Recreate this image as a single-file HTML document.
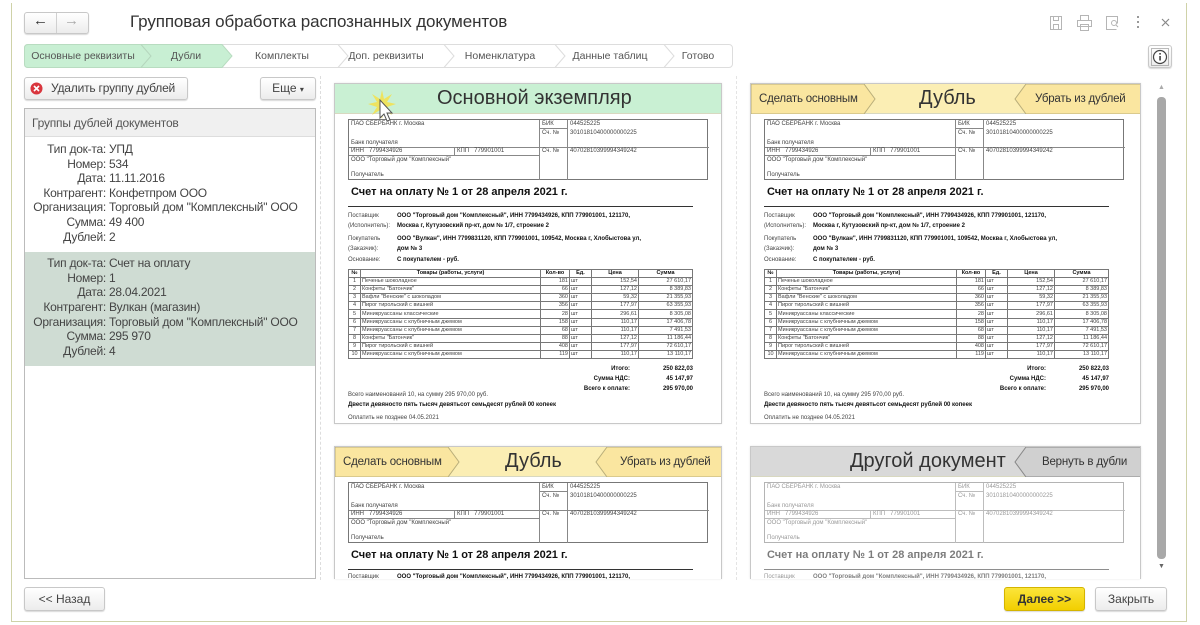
<!DOCTYPE html>
<html><head><meta charset="utf-8">
<style>
*{box-sizing:border-box;margin:0;padding:0}
body{width:1200px;height:625px;background:#fff;font-family:"Liberation Sans",Arial,sans-serif;color:#333;position:relative;overflow:hidden}
.a{position:absolute}
.win{left:11px;top:3px;width:1176px;height:619px;border:1px solid #cfd2a8;border-top:none}
.btn{position:absolute;background:linear-gradient(#fff,#ececec);border:1px solid #c8c8c8;border-radius:3px;box-shadow:0 1px 1px rgba(0,0,0,.15);font-size:12px;color:#444;text-align:center;white-space:nowrap}
.step{position:absolute;top:44px;height:24px;font-size:10.5px;color:#555;line-height:24px;text-align:center}
.card{position:absolute;border:1px solid #c8c8c8;background:#fff;overflow:hidden;box-shadow:0 0 2px rgba(0,0,0,.1)}
.hdr{position:absolute;left:0;top:0;right:0;height:30px;border-bottom:1px solid #d8d8c0}
.ht{position:absolute;top:3px;font-size:20px;color:#333;white-space:nowrap}
.hb{position:absolute;top:9px;font-size:11.5px;color:#333;white-space:nowrap;letter-spacing:-0.2px}
.doc{position:absolute;left:0;top:30px;width:390px;height:320px;font-size:6px;color:#444}
.bank{position:absolute;left:13px;top:5px;width:360px;height:61px;border:1px solid #777}
.ln{position:absolute;background:#888}
.t{position:absolute;white-space:nowrap}
.b{font-weight:bold;color:#111}
table.g{position:absolute;left:13px;top:155px;width:345px;border-collapse:collapse;font-size:5.5px}
table.g td{border:1px solid #777;height:8.1px;padding:0 1px;line-height:7px;white-space:nowrap}
table.g tr:first-child td{font-weight:bold;text-align:center;color:#111}
.r{text-align:right}.c{text-align:center}
.lst{display:flex;white-space:nowrap;font-size:12px;letter-spacing:-0.25px;line-height:14.6px;color:#444}
.lst .l{width:81px;text-align:right;direction:rtl}
.lst .l span{direction:ltr;unicode-bidi:embed}
</style></head><body>
<div class="a win"></div>

<div class="btn" style="left:24px;top:12px;width:65px;height:22px"></div>
<div class="a" style="left:56px;top:13px;width:1px;height:20px;background:#d0d0d0"></div>
<div class="a" style="left:33px;top:12px;font-size:15px;color:#333;font-weight:bold">&#8592;</div>
<div class="a" style="left:64px;top:12px;font-size:15px;color:#aaa;font-weight:bold">&#8594;</div>
<div class="a" style="left:130px;top:12px;font-size:17px;color:#333;letter-spacing:-0.1px">Групповая обработка распознанных документов</div>

<svg class="a" style="left:1046px;top:12px" width="140" height="22" viewBox="0 0 140 22">
<g fill="none" stroke="#b5b5b5" stroke-width="1">
<rect x="4.5" y="4.5" width="11" height="13"/><rect x="7.5" y="4.5" width="5" height="4"/><rect x="7.5" y="12.5" width="5" height="5"/>
<rect x="34.5" y="3.5" width="8" height="5"/><rect x="31.5" y="8.5" width="14" height="6"/><rect x="34.5" y="12.5" width="8" height="6"/>
<path d="M70.5 17.5h-10v-13h11v7"/><circle cx="68" cy="11" r="2.5"/><path d="M70 13l2 2"/>
</g>
<g fill="#999"><rect x="91" y="4" width="2" height="2"/><rect x="91" y="9" width="2" height="2"/><rect x="91" y="14" width="2" height="2"/></g>
<path d="M116 7l7 7M123 7l-7 7" stroke="#888" stroke-width="1.2"/>
</svg>

<div class="a" style="left:24px;top:44px;width:709px;height:24px;border:1px solid #ddd;border-radius:4px"></div>
<svg class="a" style="left:24px;top:44px" width="710" height="24">
<path d="M4 0.5H198L208 12L198 23.5H4Q0.5 23.5 0.5 20V4Q0.5 0.5 4 0.5Z" fill="#c8efd3" stroke="#b8dcc0"/>
<path d="M117 0.5L127 12L117 23.5" fill="none" stroke="#b5d6bd"/>
<g fill="none" stroke="#ddd"><path d="M314 0.5L324 12L314 23.5"/><path d="M420 0.5L430 12L420 23.5"/><path d="M531 0.5L541 12L531 23.5"/><path d="M640 0.5L650 12L640 23.5"/></g>
</svg>
<div class="step" style="left:24px;width:118px">Основные реквизиты</div>
<div class="step" style="left:150px;width:72px">Дубли</div>
<div class="step" style="left:236px;width:92px">Комплекты</div>
<div class="step" style="left:336px;width:100px">Доп. реквизиты</div>
<div class="step" style="left:446px;width:108px">Номенклатура</div>
<div class="step" style="left:558px;width:104px">Данные таблиц</div>
<div class="step" style="left:668px;width:60px">Готово</div>

<div class="btn" style="left:1148px;top:45px;width:24px;height:23px"></div>
<svg class="a" style="left:1150px;top:47px" width="20" height="20"><rect x="1.5" y="1.5" width="17" height="17" fill="none" stroke="#777" stroke-dasharray="1 1"/><circle cx="10" cy="10" r="6.5" fill="#fff" stroke="#444" stroke-width="1.2"/><rect x="9.3" y="9" width="1.5" height="4.5" fill="#333"/><rect x="9.3" y="6" width="1.5" height="1.6" fill="#333"/></svg>

<div class="btn" style="left:24px;top:77px;width:164px;height:23px;line-height:21px;text-align:left;padding-left:26px;letter-spacing:-0.2px">Удалить группу дублей</div>
<svg class="a" style="left:30px;top:82px" width="13" height="13"><circle cx="6.5" cy="6.5" r="6" fill="#d9363e"/><path d="M4 4l5 5M9 4l-5 5" stroke="#fff" stroke-width="1.6"/></svg>
<div class="btn" style="left:260px;top:77px;width:56px;height:23px;line-height:21px">Еще <span style="font-size:8px">&#9662;</span></div>

<div class="a" style="left:24px;top:108px;width:292px;height:471px;border:1px solid #bbb"></div>
<div class="a" style="left:25px;top:109px;width:290px;height:28px;background:#f0f0f0;border-bottom:1px solid #ddd;font-size:12px;color:#555;line-height:28px;padding-left:7px;letter-spacing:-0.2px">Группы дублей документов</div>
<div class="a" style="left:25px;top:252px;width:290px;height:114px;background:#cfdcd3"></div>
<div class="a" style="left:25px;top:142px;width:290px">
<div class="lst"><div class="l"><span>Тип док-та:</span><br><span>Номер:</span><br><span>Дата:</span><br><span>Контрагент:</span><br><span>Организация:</span><br><span>Сумма:</span><br><span>Дублей:</span></div><div style="padding-left:3px">УПД<br>534<br>11.11.2016<br>Конфетпром ООО<br>Торговый дом "Комплексный" ООО<br>49 400<br>2</div></div>
<div class="lst" style="margin-top:12px"><div class="l"><span>Тип док-та:</span><br><span>Номер:</span><br><span>Дата:</span><br><span>Контрагент:</span><br><span>Организация:</span><br><span>Сумма:</span><br><span>Дублей:</span></div><div style="padding-left:3px">Счет на оплату<br>1<br>28.04.2021<br>Вулкан (магазин)<br>Торговый дом "Комплексный" ООО<br>295 970<br>4</div></div>
</div>

<div class="a" style="left:320px;top:76px;height:504px;border-left:1px dashed #ddd"></div>
<div class="a" style="left:736px;top:76px;height:504px;border-left:1px dashed #e4e4e4"></div>

<!-- card1 -->
<div class="card" style="left:334px;top:83px;width:388px;height:341px">
<div class="hdr" style="background:#c9f0d3"></div>
<div class="ht" style="left:102px">Основной экземпляр</div>
<div class="doc">
<div class="bank"><div class="ln" style="left:190px;top:0;width:1px;height:60px"></div><div class="ln" style="left:218px;top:0;width:1px;height:60px"></div><div class="ln" style="left:0;top:27px;width:360px;height:1px"></div><div class="ln" style="left:0;top:35px;width:190px;height:1px"></div><div class="ln" style="left:105px;top:27px;width:1px;height:8px"></div><div class="ln" style="left:190px;top:8px;width:28px;height:1px"></div>
<div class="t" style="left:2px;top:1px">ПАО СБЕРБАНК г. Москва</div><div class="t" style="left:2px;top:20px">Банк получателя</div><div class="t" style="left:2px;top:28px">ИНН &nbsp; 7799434926</div><div class="t" style="left:108px;top:28px">КПП &nbsp; 779901001</div><div class="t" style="left:2px;top:37px">ООО "Торговый дом "Комплексный"</div><div class="t" style="left:2px;top:52px">Получатель</div>
<div class="t" style="left:193px;top:1px">БИК</div><div class="t" style="left:221px;top:1px">044525225</div><div class="t" style="left:193px;top:10px">Сч. №</div><div class="t" style="left:221px;top:10px">30101810400000000225</div><div class="t" style="left:193px;top:28px">Сч. №</div><div class="t" style="left:221px;top:28px">40702810399994349242</div></div>
<div class="t b" style="left:16px;top:72px;font-size:11px">Счет на оплату № 1 от 28 апреля 2021 г.</div>
<div class="ln" style="left:13px;top:92px;width:345px;height:1px;background:#333"></div>
<div class="t" style="left:13px;top:97px;line-height:10px">Поставщик<br>(Исполнитель):</div><div class="t b" style="left:62px;top:97px;line-height:10px">ООО "Торговый дом "Комплексный", ИНН 7799434926, КПП 779901001, 121170,<br>Москва г, Кутузовский пр-кт, дом № 1/7, строение 2</div>
<div class="t" style="left:13px;top:120px;line-height:10px">Покупатель<br>(Заказчик):</div><div class="t b" style="left:62px;top:120px;line-height:10px">ООО "Вулкан", ИНН 7799831120, КПП 779901001, 109542, Москва г, Хлобыстова ул,<br>дом № 3</div>
<div class="t" style="left:13px;top:143px">Основание:</div><div class="t b" style="left:62px;top:143px">С покупателем - руб.</div>
<table class="g"><tr><td style="width:12px">№</td><td>Товары (работы, услуги)</td><td style="width:29px">Кол-во</td><td style="width:22px">Ед.</td><td style="width:47px">Цена</td><td style="width:54px">Сумма</td></tr>
<tr><td class="c">1</td><td>Печенье шоколадное</td><td class="r">181</td><td>шт</td><td class="r">152,54</td><td class="r">27 610,17</td></tr>
<tr><td class="c">2</td><td>Конфеты "Батончик"</td><td class="r">66</td><td>шт</td><td class="r">127,12</td><td class="r">8 389,83</td></tr>
<tr><td class="c">3</td><td>Вафли "Венские" с шоколадом</td><td class="r">360</td><td>шт</td><td class="r">59,32</td><td class="r">21 355,93</td></tr>
<tr><td class="c">4</td><td>Пирог тирольский с вишней</td><td class="r">356</td><td>шт</td><td class="r">177,97</td><td class="r">63 355,93</td></tr>
<tr><td class="c">5</td><td>Миникруассаны классические</td><td class="r">28</td><td>шт</td><td class="r">296,61</td><td class="r">8 305,08</td></tr>
<tr><td class="c">6</td><td>Миникруассаны с клубничным джемом</td><td class="r">158</td><td>шт</td><td class="r">110,17</td><td class="r">17 406,78</td></tr>
<tr><td class="c">7</td><td>Миникруассаны с клубничным джемом</td><td class="r">68</td><td>шт</td><td class="r">110,17</td><td class="r">7 491,53</td></tr>
<tr><td class="c">8</td><td>Конфеты "Батончик"</td><td class="r">88</td><td>шт</td><td class="r">127,12</td><td class="r">11 186,44</td></tr>
<tr><td class="c">9</td><td>Пирог тирольский с вишней</td><td class="r">408</td><td>шт</td><td class="r">177,97</td><td class="r">72 610,17</td></tr>
<tr><td class="c">10</td><td>Миникруассаны с клубничным джемом</td><td class="r">119</td><td>шт</td><td class="r">110,17</td><td class="r">13 110,17</td></tr></table>
<div class="t b" style="right:95px;top:250px;line-height:10px;text-align:right">Итого:<br>Сумма НДС:<br>Всего к оплате:</div>
<div class="t b" style="right:32px;top:250px;line-height:10px;text-align:right">250 822,03<br>45 147,97<br>295 970,00</div>
<div class="t" style="left:13px;top:278px">Всего наименований 10, на сумму 295 970,00 руб.</div>
<div class="t b" style="left:13px;top:288px">Двести девяносто пять тысяч девятьсот семьдесят рублей 00 копеек</div>
<div class="t" style="left:13px;top:301px">Оплатить не позднее 04.05.2021</div>
</div>
<svg class="a" style="left:30px;top:4px" width="34" height="40"><path d="M17 2l2 9 8-5-5 8 9 2-9 3 5 8-8-5-2 9-2-9-8 5 5-8-9-3 9-2-5-8 8 5z" fill="#f5e04a" opacity=".85"/><path d="M15 12v18l4-4 3 7 3-1-3-7 5 0z" fill="#fff" stroke="#555"/></svg>
</div>

<!-- card2 -->
<div class="card" style="left:750px;top:83px;width:391px;height:341px">
<div class="hdr" style="background:#fbeeb4"></div>
<svg class="a" style="left:0;top:0" width="391" height="30"><path d="M0 0H113L124 15L113 30H0Z" fill="#fae6a0" stroke="#b9ae7a"/><path d="M391 0H275L264 15L275 30H391Z" fill="#fae6a0" stroke="#b9ae7a"/></svg>
<div class="hb" style="left:8px">Сделать основным</div>
<div class="hb" style="left:284px">Убрать из дублей</div>
<div class="ht" style="left:168px">Дубль</div>
<div class="doc">
<div class="bank"><div class="ln" style="left:190px;top:0;width:1px;height:60px"></div><div class="ln" style="left:218px;top:0;width:1px;height:60px"></div><div class="ln" style="left:0;top:27px;width:360px;height:1px"></div><div class="ln" style="left:0;top:35px;width:190px;height:1px"></div><div class="ln" style="left:105px;top:27px;width:1px;height:8px"></div><div class="ln" style="left:190px;top:8px;width:28px;height:1px"></div>
<div class="t" style="left:2px;top:1px">ПАО СБЕРБАНК г. Москва</div><div class="t" style="left:2px;top:20px">Банк получателя</div><div class="t" style="left:2px;top:28px">ИНН &nbsp; 7799434926</div><div class="t" style="left:108px;top:28px">КПП &nbsp; 779901001</div><div class="t" style="left:2px;top:37px">ООО "Торговый дом "Комплексный"</div><div class="t" style="left:2px;top:52px">Получатель</div>
<div class="t" style="left:193px;top:1px">БИК</div><div class="t" style="left:221px;top:1px">044525225</div><div class="t" style="left:193px;top:10px">Сч. №</div><div class="t" style="left:221px;top:10px">30101810400000000225</div><div class="t" style="left:193px;top:28px">Сч. №</div><div class="t" style="left:221px;top:28px">40702810399994349242</div></div>
<div class="t b" style="left:16px;top:72px;font-size:11px">Счет на оплату № 1 от 28 апреля 2021 г.</div>
<div class="ln" style="left:13px;top:92px;width:345px;height:1px;background:#333"></div>
<div class="t" style="left:13px;top:97px;line-height:10px">Поставщик<br>(Исполнитель):</div><div class="t b" style="left:62px;top:97px;line-height:10px">ООО "Торговый дом "Комплексный", ИНН 7799434926, КПП 779901001, 121170,<br>Москва г, Кутузовский пр-кт, дом № 1/7, строение 2</div>
<div class="t" style="left:13px;top:120px;line-height:10px">Покупатель<br>(Заказчик):</div><div class="t b" style="left:62px;top:120px;line-height:10px">ООО "Вулкан", ИНН 7799831120, КПП 779901001, 109542, Москва г, Хлобыстова ул,<br>дом № 3</div>
<div class="t" style="left:13px;top:143px">Основание:</div><div class="t b" style="left:62px;top:143px">С покупателем - руб.</div>
<table class="g"><tr><td style="width:12px">№</td><td>Товары (работы, услуги)</td><td style="width:29px">Кол-во</td><td style="width:22px">Ед.</td><td style="width:47px">Цена</td><td style="width:54px">Сумма</td></tr>
<tr><td class="c">1</td><td>Печенье шоколадное</td><td class="r">181</td><td>шт</td><td class="r">152,54</td><td class="r">27 610,17</td></tr>
<tr><td class="c">2</td><td>Конфеты "Батончик"</td><td class="r">66</td><td>шт</td><td class="r">127,12</td><td class="r">8 389,83</td></tr>
<tr><td class="c">3</td><td>Вафли "Венские" с шоколадом</td><td class="r">360</td><td>шт</td><td class="r">59,32</td><td class="r">21 355,93</td></tr>
<tr><td class="c">4</td><td>Пирог тирольский с вишней</td><td class="r">356</td><td>шт</td><td class="r">177,97</td><td class="r">63 355,93</td></tr>
<tr><td class="c">5</td><td>Миникруассаны классические</td><td class="r">28</td><td>шт</td><td class="r">296,61</td><td class="r">8 305,08</td></tr>
<tr><td class="c">6</td><td>Миникруассаны с клубничным джемом</td><td class="r">158</td><td>шт</td><td class="r">110,17</td><td class="r">17 406,78</td></tr>
<tr><td class="c">7</td><td>Миникруассаны с клубничным джемом</td><td class="r">68</td><td>шт</td><td class="r">110,17</td><td class="r">7 491,53</td></tr>
<tr><td class="c">8</td><td>Конфеты "Батончик"</td><td class="r">88</td><td>шт</td><td class="r">127,12</td><td class="r">11 186,44</td></tr>
<tr><td class="c">9</td><td>Пирог тирольский с вишней</td><td class="r">408</td><td>шт</td><td class="r">177,97</td><td class="r">72 610,17</td></tr>
<tr><td class="c">10</td><td>Миникруассаны с клубничным джемом</td><td class="r">119</td><td>шт</td><td class="r">110,17</td><td class="r">13 110,17</td></tr></table>
<div class="t b" style="right:95px;top:250px;line-height:10px;text-align:right">Итого:<br>Сумма НДС:<br>Всего к оплате:</div>
<div class="t b" style="right:32px;top:250px;line-height:10px;text-align:right">250 822,03<br>45 147,97<br>295 970,00</div>
<div class="t" style="left:13px;top:278px">Всего наименований 10, на сумму 295 970,00 руб.</div>
<div class="t b" style="left:13px;top:288px">Двести девяносто пять тысяч девятьсот семьдесят рублей 00 копеек</div>
<div class="t" style="left:13px;top:301px">Оплатить не позднее 04.05.2021</div>
</div>
</div>

<!-- card3 -->
<div class="card" style="left:334px;top:446px;width:388px;height:133px;border-bottom:none">
<div class="hdr" style="background:#fbeeb4"></div>
<svg class="a" style="left:0;top:0" width="388" height="30"><path d="M0 0H113L124 15L113 30H0Z" fill="#fae6a0" stroke="#b9ae7a"/><path d="M388 0H272L261 15L272 30H388Z" fill="#fae6a0" stroke="#b9ae7a"/></svg>
<div class="hb" style="left:8px">Сделать основным</div>
<div class="hb" style="left:285px">Убрать из дублей</div>
<div class="ht" style="left:170px">Дубль</div>
<div class="doc">
<div class="bank"><div class="ln" style="left:190px;top:0;width:1px;height:60px"></div><div class="ln" style="left:218px;top:0;width:1px;height:60px"></div><div class="ln" style="left:0;top:27px;width:360px;height:1px"></div><div class="ln" style="left:0;top:35px;width:190px;height:1px"></div><div class="ln" style="left:105px;top:27px;width:1px;height:8px"></div><div class="ln" style="left:190px;top:8px;width:28px;height:1px"></div>
<div class="t" style="left:2px;top:1px">ПАО СБЕРБАНК г. Москва</div><div class="t" style="left:2px;top:20px">Банк получателя</div><div class="t" style="left:2px;top:28px">ИНН &nbsp; 7799434926</div><div class="t" style="left:108px;top:28px">КПП &nbsp; 779901001</div><div class="t" style="left:2px;top:37px">ООО "Торговый дом "Комплексный"</div><div class="t" style="left:2px;top:52px">Получатель</div>
<div class="t" style="left:193px;top:1px">БИК</div><div class="t" style="left:221px;top:1px">044525225</div><div class="t" style="left:193px;top:10px">Сч. №</div><div class="t" style="left:221px;top:10px">30101810400000000225</div><div class="t" style="left:193px;top:28px">Сч. №</div><div class="t" style="left:221px;top:28px">40702810399994349242</div></div>
<div class="t b" style="left:16px;top:72px;font-size:11px">Счет на оплату № 1 от 28 апреля 2021 г.</div>
<div class="ln" style="left:13px;top:92px;width:345px;height:1px;background:#333"></div>
<div class="t" style="left:13px;top:97px">Поставщик</div><div class="t b" style="left:62px;top:97px">ООО "Торговый дом "Комплексный", ИНН 7799434926, КПП 779901001, 121170,</div>
</div>
</div>

<!-- card4 -->
<div class="card" style="left:750px;top:446px;width:391px;height:133px;border-bottom:none">
<div class="hdr" style="background:#d9d9d9"></div>
<svg class="a" style="left:0;top:0" width="391" height="30"><path d="M391 0H275L264 15L275 30H391Z" fill="#d0d0d0" stroke="#888"/></svg>
<div class="ht" style="left:99px">Другой документ</div>
<div class="hb" style="left:291px">Вернуть в дубли</div>
<div class="doc" style="opacity:.55">
<div class="bank"><div class="ln" style="left:190px;top:0;width:1px;height:60px"></div><div class="ln" style="left:218px;top:0;width:1px;height:60px"></div><div class="ln" style="left:0;top:27px;width:360px;height:1px"></div><div class="ln" style="left:0;top:35px;width:190px;height:1px"></div><div class="ln" style="left:105px;top:27px;width:1px;height:8px"></div><div class="ln" style="left:190px;top:8px;width:28px;height:1px"></div>
<div class="t" style="left:2px;top:1px">ПАО СБЕРБАНК г. Москва</div><div class="t" style="left:2px;top:20px">Банк получателя</div><div class="t" style="left:2px;top:28px">ИНН &nbsp; 7799434926</div><div class="t" style="left:108px;top:28px">КПП &nbsp; 779901001</div><div class="t" style="left:2px;top:37px">ООО "Торговый дом "Комплексный"</div><div class="t" style="left:2px;top:52px">Получатель</div>
<div class="t" style="left:193px;top:1px">БИК</div><div class="t" style="left:221px;top:1px">044525225</div><div class="t" style="left:193px;top:10px">Сч. №</div><div class="t" style="left:221px;top:10px">30101810400000000225</div><div class="t" style="left:193px;top:28px">Сч. №</div><div class="t" style="left:221px;top:28px">40702810399994349242</div></div>
<div class="t b" style="left:16px;top:72px;font-size:11px">Счет на оплату № 1 от 28 апреля 2021 г.</div>
<div class="ln" style="left:13px;top:92px;width:345px;height:1px;background:#333"></div>
<div class="t" style="left:13px;top:97px">Поставщик</div><div class="t b" style="left:62px;top:97px">ООО "Торговый дом "Комплексный", ИНН 7799434926, КПП 779901001, 121170,</div>
</div>
</div>

<div class="a" style="left:1158px;top:84px;font-size:7px;color:#aaa">&#9650;</div>
<div class="a" style="left:1157px;top:97px;width:9px;height:462px;background:#a8a8a8;border-radius:4px"></div>
<div class="a" style="left:1158px;top:563px;font-size:7px;color:#666">&#9660;</div>

<div class="btn" style="left:24px;top:587px;width:81px;height:24px;line-height:22px">&lt;&lt; Назад</div>
<div class="btn" style="left:1004px;top:587px;width:81px;height:24px;line-height:22px;background:linear-gradient(#fbe53a,#f2cf00);border-color:#d4b400;font-weight:bold;color:#333">Далее &gt;&gt;</div>
<div class="btn" style="left:1095px;top:587px;width:72px;height:24px;line-height:22px">Закрыть</div>
</body></html>
